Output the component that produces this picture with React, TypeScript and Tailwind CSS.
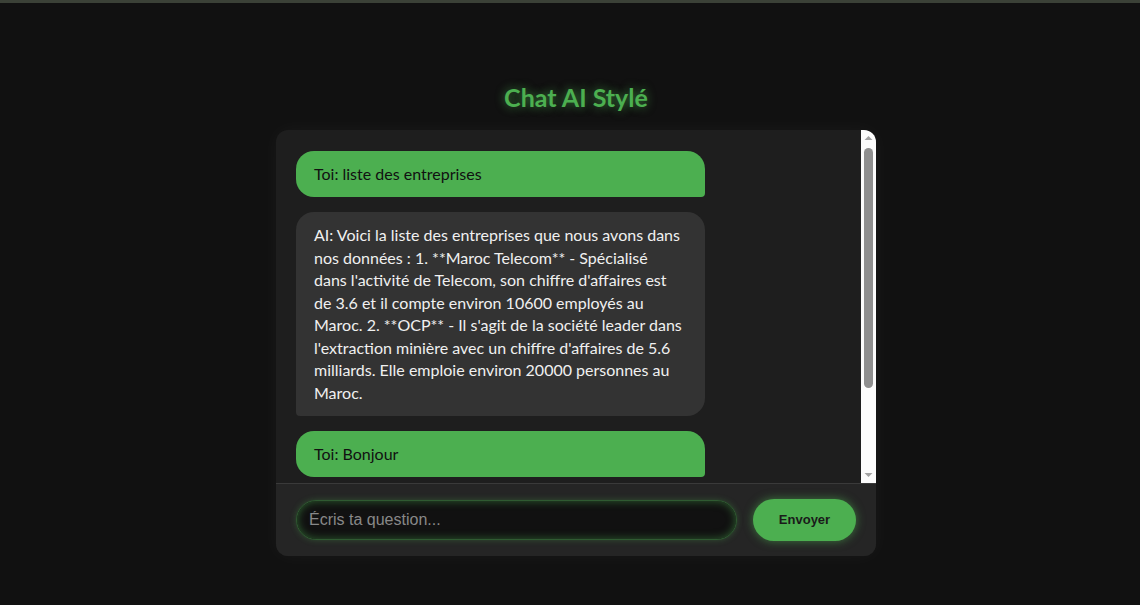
import { useEffect, useRef } from "react";

type Message = { from: "user" | "ai"; lines: string[] };

const messages: Message[] = [
  { from: "user", lines: ["Toi: liste des entreprises"] },
  {
    from: "ai",
    lines: [
      "AI: Voici la liste des entreprises que nous avons dans",
      "nos données : 1. **Maroc Telecom** - Spécialisé",
      "dans l'activité de Telecom, son chiffre d'affaires est",
      "de 3.6 et il compte environ 10600 employés au",
      "Maroc. 2. **OCP** - Il s'agit de la société leader dans",
      "l'extraction minière avec un chiffre d'affaires de 5.6",
      "milliards. Elle emploie environ 20000 personnes au",
      "Maroc.",
    ],
  },
  { from: "user", lines: ["Toi: Bonjour"] },
  { from: "ai", lines: ["AI: Bonjour ! Comment puis-je vous aider aujourd'hui ?"] },
];

function Scrollbar() {
  return (
    <div className="flex w-[15px] shrink-0 flex-col items-center bg-[#fcfcfc]">
      <svg width="15" height="15" viewBox="0 0 15 15" className="shrink-0">
        <path d="M3.5 10 L7.5 6 L11.5 10 Z" fill="#a3a3a3" />
      </svg>
      <div className="mt-[3px] h-[240px] w-[9px] rounded-full bg-[#8f8f8f]" />
      <div className="flex-1" />
      <svg width="15" height="15" viewBox="0 0 15 15" className="shrink-0">
        <path d="M3.5 5 L7.5 9 L11.5 5 Z" fill="#a3a3a3" />
      </svg>
    </div>
  );
}

export default function App() {
  const inputRef = useRef<HTMLInputElement>(null);

  useEffect(() => {
    inputRef.current?.focus();
  }, []);

  return (
    <div className="min-h-[605px] bg-[#111111] font-['Lato',sans-serif]">
      <div className="h-[3px] bg-[#3b4137]" />
      <div className="flex flex-col items-center pl-[12px] pt-[78px]">
        <h1 className="mb-[17px] text-[25px] font-bold leading-[32px] text-[#4caf50] [text-shadow:0_0_10px_rgba(76,175,80,0.7)]">
          Chat AI Stylé
        </h1>

        <div className="flex w-[600px] flex-col overflow-hidden rounded-xl bg-[#1e1e1e] shadow-[0_0_20px_rgba(255,255,255,0.04)]">
          {/* Messages */}
          <div className="flex h-[353px]">
            <div className="flex flex-1 flex-col gap-[15px] overflow-hidden px-5 pb-5 pt-[21px]">
              {messages.map((m, i) => (
                <div
                  key={i}
                  className={
                    m.from === "user"
                      ? "w-[75%] shrink-0 rounded-[18px] rounded-br-[4px] bg-[#4caf50] px-[18px] py-3 text-[16px] leading-[22px] text-[#111111]"
                      : "w-[75%] shrink-0 rounded-[18px] rounded-bl-[4px] bg-[#333333] px-[18px] py-3 text-[16px] leading-[22.5px] text-[#f0f0f0]"
                  }
                >
                  {m.lines.map((l, j) => (
                    <span key={j} className="block">
                      {l}
                    </span>
                  ))}
                </div>
              ))}
            </div>
            <Scrollbar />
          </div>

          {/* Input */}
          <div className="flex items-center gap-4 border-t border-[#3a3a3a] bg-[#252525] px-5 py-[15px]">
            <input
              ref={inputRef}
              placeholder="Écris ta question..."
              className="h-[40px] flex-1 rounded-full border border-[#2f5a31] bg-[#111111] px-3 font-['Liberation_Sans',sans-serif] text-[16px] text-white caret-white shadow-[inset_0_0_8px_rgba(76,175,80,0.5),0_0_6px_rgba(76,175,80,0.3)] outline-none placeholder:text-[#888888]"
            />
            <button className="h-[42px] w-[103px] rounded-full bg-[#4caf50] font-['Liberation_Sans',sans-serif] text-[13px] font-bold text-[#1a1a1a] shadow-[0_0_10px_rgba(76,175,80,0.6)]">
              Envoyer
            </button>
          </div>
        </div>
      </div>
    </div>
  );
}
